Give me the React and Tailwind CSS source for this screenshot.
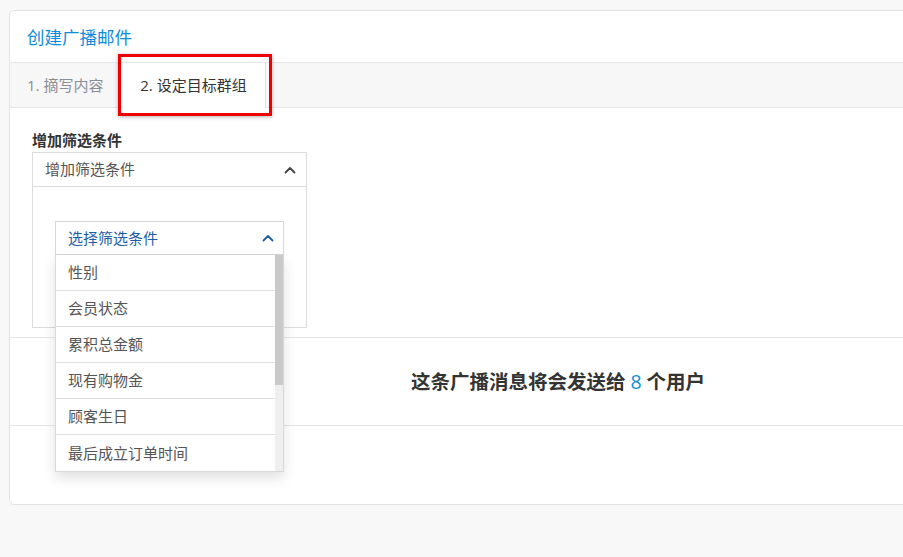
import React from 'react';

const Chevron = ({ color }) => (
  <svg width="12" height="8" viewBox="0 0 12 8" fill="none">
    <polyline points="1.5,6.5 6,2 10.5,6.5" stroke={color} strokeWidth="1.8" strokeLinecap="round" strokeLinejoin="round" />
  </svg>
);

const options = ['性别', '会员状态', '累积总金额', '现有购物金', '顾客生日', '最后成立订单时间'];

export default function App() {
  return (
    <div
      className="w-[903px] h-[557px] overflow-hidden bg-[#f8f8f8] pt-[10px] pl-[9px]"
      style={{ fontFamily: '"Open Sans", "Noto Sans CJK SC", sans-serif' }}
    >
      <div className="w-[1098px] bg-white border border-[#e3e3e3] rounded-[5px]">
        {/* Header */}
        <div className="h-[52px] flex items-center px-[17px] border-b border-[#e6e6e6]">
          <h1 className="text-[17.5px] text-[#0b8ddb] leading-none pt-[2px]">创建广播邮件</h1>
        </div>

        {/* Tabs */}
        <div className="h-[45px] bg-[#f7f7f7] border-b border-[#e6e6e6] flex items-stretch">
          <div className="w-[112px] pl-[17px] flex items-center text-[15px] text-[#8a8e97]">1. 摘写内容</div>
          <div className="relative w-[144px] -mb-px bg-white border-r border-[#e3e3e3] flex items-center justify-center text-[15px] text-[#333]">
            2. 设定目标群组
            <div className="absolute -left-[4px] -right-[7px] -top-[9px] -bottom-[8px] border-[3px] border-[#ee0000] shadow-[0_1px_4px_rgba(0,0,0,0.3)]" />
          </div>
        </div>

        {/* Filter section */}
        <div className="pl-[22px] pt-[22px] pb-[9px]">
          <div className="text-[15px] font-bold text-[#333] leading-[20px]">增加筛选条件</div>
          <div className="mt-[2px] w-[275px] h-[35px] border border-[#dcdcdc] flex items-center justify-between pl-[12px] pr-[10px] text-[15px] text-[#555]">
            <span>增加筛选条件</span>
            <Chevron color="#444" />
          </div>
          <div className="w-[275px] h-[141px] border border-t-0 border-[#dcdcdc] pt-[34px] pl-[22px]">
            <div className="relative w-[229px]">
              <div className="h-[34px] border border-[#d6d6d6] flex items-center justify-between pl-[12px] pr-[9px] text-[15px] text-[#1c5ea6]">
                <span>选择筛选条件</span>
                <Chevron color="#1c5ea6" />
              </div>
              <div className="absolute left-0 top-full z-10 w-[229px] h-[217px] bg-white border border-t-0 border-[#d9d9d9] shadow-[0_6px_12px_rgba(0,0,0,0.12)] flex">
                <div className="flex-1 flex flex-col">
                  {options.map((o, i) => (
                    <div
                      key={o}
                      className={`h-[36px] flex items-center pl-[12px] text-[15px] text-[#555] ${i < options.length - 1 ? 'border-b border-[#dedede]' : ''}`}
                    >
                      {o}
                    </div>
                  ))}
                </div>
                <div className="w-[8px] bg-[#efefef]">
                  <div className="h-[130px] bg-[#c9c9c9]" />
                </div>
              </div>
            </div>
          </div>
        </div>

        {/* Summary */}
        <div className="h-[89px] border-y border-[#e6e6e6] flex items-center justify-center text-[19.5px] font-bold text-[#333]">
          这条广播消息将会发送给 <span className="text-[#0b8ddb] font-normal mx-[5px]">8</span> 个用户
        </div>

        <div className="h-[78px]" />
      </div>
    </div>
  );
}
